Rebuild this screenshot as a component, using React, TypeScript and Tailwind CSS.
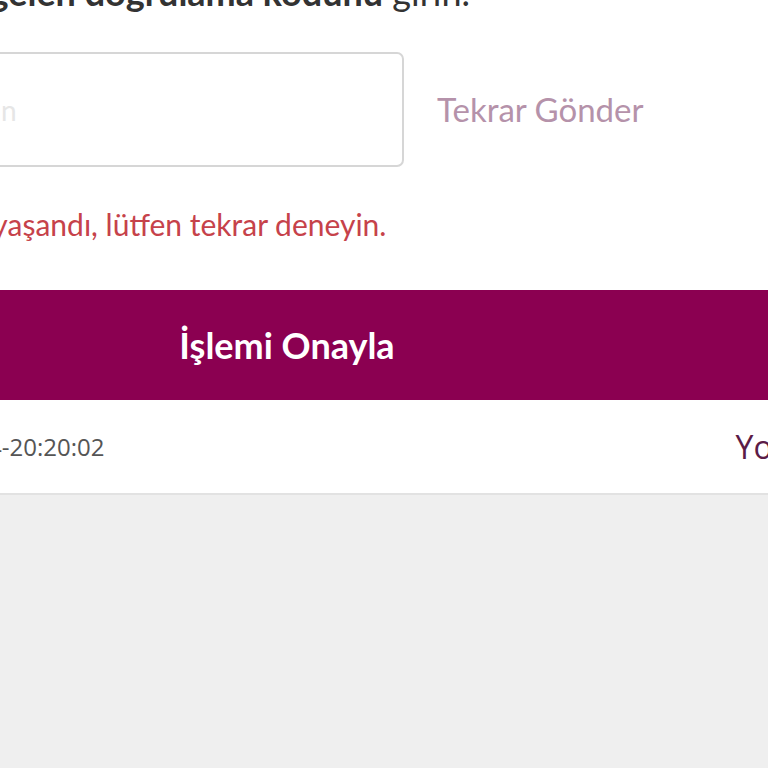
export default function App() {
  return (
    <div className="w-[768px] h-[768px] overflow-hidden bg-[#efefef] font-['Lato','Noto_Sans',sans-serif]">
      <div className="ml-[-330px] w-[1234px] bg-white border-b-2 border-[#e2e2e2]">
        <div className="px-[30px]">
          <p className="-mt-[28px] w-[770px] text-right text-[36px] leading-[40px] text-[#333333] whitespace-nowrap">
            <span className="font-bold">Telefonunuza gelen doğrulama kodunu</span> girin.
          </p>
          <div className="flex items-center gap-[33px] mt-[40px]">
            <input
              className="w-[704px] h-[115px] rounded-[7px] border-2 border-[#d6d6d6] px-5 text-[28px] placeholder:text-[#e6e6e6] outline-none"
              placeholder="Doğrulama kodunu girin"
            />
            <button className="text-[33px] text-[#b592aa] whitespace-nowrap">Tekrar Gönder</button>
          </div>
          <p className="mt-[39px] -ml-[12px] text-[30px] leading-[36px] text-[#c6424a] whitespace-nowrap">
            İşlem sırasında bir hata yaşandı, lütfen tekrar deneyin.
          </p>
        </div>
        <button className="mt-[48px] w-full h-[110px] bg-[#8b0051] text-white text-[36px] font-bold">
          İşlemi Onayla
        </button>
        <div className="flex items-center justify-between h-[93px] pl-[89px] pr-[30px]">
          <span className="text-[24px] text-[#555555] font-['Open_Sans',sans-serif]">
            Son işlem: 08.05.2024-20:20:02
          </span>
          <span className="text-[32px] text-[#5c1c47] font-['Open_Sans',sans-serif]">Yorumlar</span>
        </div>
      </div>
    </div>
  );
}
